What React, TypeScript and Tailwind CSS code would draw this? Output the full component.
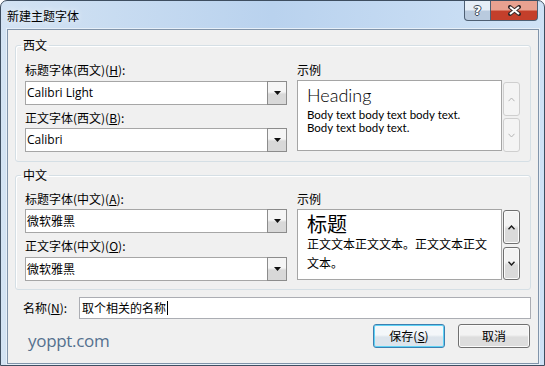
import React from "react";

const Key = ({ k }: { k: string }) => <span className="underline">{k}</span>;

const Chevron = ({ up, enabled }: { up?: boolean; enabled?: boolean }) => (
  <svg width="7" height="5" viewBox="0 0 7 5">
    <polyline
      points={up ? "0.5,4.2 3.5,1 6.5,4.2" : "0.5,0.8 3.5,4 6.5,0.8"}
      fill="none"
      stroke={enabled ? "#1a1a1a" : "#b4b4b4"}
      strokeWidth={enabled ? 1.4 : 1}
    />
  </svg>
);

const Combo = ({ value, latin }: { value: string; latin?: boolean }) => (
  <div className="flex h-6 w-[262px] border border-[#a6a6a6] bg-white">
    <div
      className={
        latin
          ? "flex-1 pl-px font-['Open_Sans',sans-serif] text-[12px] leading-[22px] text-black"
          : "flex-1 pl-px text-[12px] leading-[22px] text-black"
      }
    >
      {value}
    </div>
    <div className="-my-px -mr-px flex w-[20px] items-center justify-center border border-[#8c8c8c] bg-gradient-to-b from-[#f5f5f5] from-45% to-[#d8d8d8] to-55%">
      <svg width="7" height="4" viewBox="0 0 7 4">
        <path d="M0 0H7L3.5 4Z" fill="#111" />
      </svg>
    </div>
  </div>
);

type GroupProps = {
  title: string;
  headLabel: React.ReactNode;
  bodyLabel: React.ReactNode;
  headFont: string;
  bodyFont: string;
  latin?: boolean;
  preview: React.ReactNode;
};

const FontGroup = ({ title, headLabel, bodyLabel, headFont, bodyFont, latin, preview }: GroupProps) => (
  <fieldset
    className={
      latin
        ? "mx-[7px] mt-[7px] rounded-[3px] border border-[#d5dfe5] p-0 shadow-[inset_1px_1px_0_#fff]"
        : "mx-[7px] mt-[5px] rounded-[3px] border border-[#d5dfe5] p-0 shadow-[inset_1px_1px_0_#fff]"
    }
  >
    <legend className="ml-[5px] px-[2px] text-[12px] leading-4 text-black">{title}</legend>
    <div className={latin ? "flex px-[9px] pt-[9px] pb-[9px]" : "flex px-[9px] pt-[8px] pb-[8px]"}>
      <div className="flex flex-col">
        <div className={latin ? "mb-[3px] h-4 leading-4" : "mb-[2px] h-4 leading-4"}>{headLabel}</div>
        <Combo value={headFont} latin={latin} />
        <div className={latin ? "mt-[5px] mb-[2px] h-4 leading-4" : "mt-[5px] mb-[3px] h-4 leading-4"}>{bodyLabel}</div>
        <Combo value={bodyFont} latin={latin} />
      </div>
      <div className="ml-[10px] flex flex-col">
        <div className="mb-[2px] h-4 leading-4">示例</div>
        <div className="flex">
          <div className="h-[71px] w-[205px] border border-[#a5a5a5] bg-white pt-[3px] pl-[9px] text-black">
            {preview}
          </div>
          {latin ? (
            <div className="mt-[2px] ml-px flex flex-col gap-[2px]">
              <div className="flex h-[34px] w-[17px] items-center justify-center rounded-[3px] border border-[#cfcfcf] bg-[#f4f4f4]">
                <Chevron up />
              </div>
              <div className="flex h-[34px] w-[17px] items-center justify-center rounded-[3px] border border-[#cfcfcf] bg-[#f4f4f4]">
                <Chevron />
              </div>
            </div>
          ) : (
            <div className="mt-px ml-px flex flex-col gap-[3px]">
              <div className="flex h-[34px] w-[17px] items-center justify-center rounded-[3px] border border-[#707070] bg-gradient-to-b from-[#f3f3f3] from-45% to-[#dadada] to-55% shadow-[inset_0_0_0_1px_#fbfbfb]">
                <Chevron up enabled />
              </div>
              <div className="flex h-[33px] w-[17px] items-center justify-center rounded-[3px] border border-[#707070] bg-gradient-to-b from-[#f3f3f3] from-45% to-[#dadada] to-55% shadow-[inset_0_0_0_1px_#fbfbfb]">
                <Chevron enabled />
              </div>
            </div>
          )}
        </div>
      </div>
    </div>
  </fieldset>
);

const App: React.FC = () => {
  return (
    <div className="h-[366px] w-[545px] bg-white font-['Noto_Sans_CJK_SC',sans-serif] text-[12px] text-black">
      <div className="flex h-[366px] w-[545px] flex-col rounded-t-[7px] border border-[#3e4e60] bg-gradient-to-r from-[#d3e3f3] via-[#b9d2ee] to-[#cfe2f6]">
        {/* Title bar */}
        <div className="flex h-[28px] shrink-0 items-start justify-between">
          <div className="pt-[7px] pl-[6px] leading-4 [text-shadow:0_0_6px_#fff]">新建主题字体</div>
          <div className="mr-[6px] flex">
            <div className="flex h-[20px] w-[27px] items-center justify-center rounded-bl-[4px] border border-t-0 border-[#4e5f73] bg-gradient-to-b from-[#e6eef7] from-45% to-[#b9cade] to-55%">
              <span className="font-['DejaVu_Sans',sans-serif] text-[13px] font-bold leading-none text-white [text-shadow:-1px_0_#3a4758,1px_0_#3a4758,0_-1px_#3a4758,0_1px_#3a4758]">
                ?
              </span>
            </div>
            <div className="flex h-[20px] w-[47px] items-center justify-center rounded-br-[4px] border border-t-0 border-l-0 border-[#4e5f73] bg-gradient-to-b from-[#e9a190] from-45% to-[#c43f2b] to-55%">
              <svg width="13" height="11" viewBox="0 0 13 11">
                <path d="M2 2L11 9M11 2L2 9" stroke="#3a2a2a" strokeWidth="4" strokeLinecap="square" />
                <path d="M2 2L11 9M11 2L2 9" stroke="#fff" strokeWidth="2" />
              </svg>
            </div>
          </div>
        </div>

        {/* Client area */}
        <div className="mr-[5px] mb-px ml-[6px] flex flex-1 flex-col border border-[#8194aa] bg-[#f0f0f0] shadow-[0_0_0_1px_#e6eff8]">
          <FontGroup
            latin
            title="西文"
            headLabel={
              <>
                标题字体(西文)(<Key k="H" />):
              </>
            }
            bodyLabel={
              <>
                正文字体(西文)(<Key k="B" />):
              </>
            }
            headFont="Calibri Light"
            bodyFont="Calibri"
            preview={
              <div className="font-['Lato',sans-serif]">
                <div className="text-[18px] leading-[22px] font-light">Heading</div>
                <div className="mt-[2px] text-[11.5px] leading-[13px]">
                  Body text body text body text.
                  <br />
                  Body text body text.
                </div>
              </div>
            }
          />
          <FontGroup
            title="中文"
            headLabel={
              <>
                标题字体(中文)(<Key k="A" />):
              </>
            }
            bodyLabel={
              <>
                正文字体(中文)(<Key k="O" />):
              </>
            }
            headFont="微软雅黑"
            bodyFont="微软雅黑"
            preview={
              <div>
                <div className="text-[20px] leading-[21px]">标题</div>
                <div className="text-[12px] leading-[19px]">
                  正文文本正文文本。正文文本正文
                  <br />
                  文本。
                </div>
              </div>
            }
          />

          {/* Name row */}
          <div className="mt-[7px] flex items-center pr-[7px] pl-[15px]">
            <div className="w-[56px] leading-4">
              名称(<Key k="N" />):
            </div>
            <div className="flex h-[22px] flex-1 items-center border border-[#abadb3] bg-white pl-[2px] leading-4">
              取个相关的名称
              <span className="ml-px h-[14px] w-px bg-black" />
            </div>
          </div>

          {/* Buttons row */}
          <div className="mt-[5px] flex items-end justify-between pr-[8px] pl-[20px]">
            <div className="-mb-[2px] font-['Open_Sans',sans-serif] text-[17px] leading-[18px] tracking-[-0.3px] text-[#55708f]">
              yoppt.com
            </div>
            <div className="flex gap-[13px]">
              <div className="flex h-6 w-[72px] items-center justify-center rounded-[3px] border border-[#3c7fb1] bg-gradient-to-b from-[#f4f7fa] from-45% to-[#dce4ec] to-55% leading-4 shadow-[inset_0_0_0_1px_#5fd2f5]">
                保存(<Key k="S" />)
              </div>
              <div className="flex h-6 w-[72px] items-center justify-center rounded-[3px] border border-[#707070] bg-gradient-to-b from-[#f3f3f3] from-45% to-[#dddddd] to-55% leading-4 shadow-[inset_0_0_0_1px_#fbfbfb]">
                取消
              </div>
            </div>
          </div>
        </div>
      </div>
    </div>
  );
};

export default App;
